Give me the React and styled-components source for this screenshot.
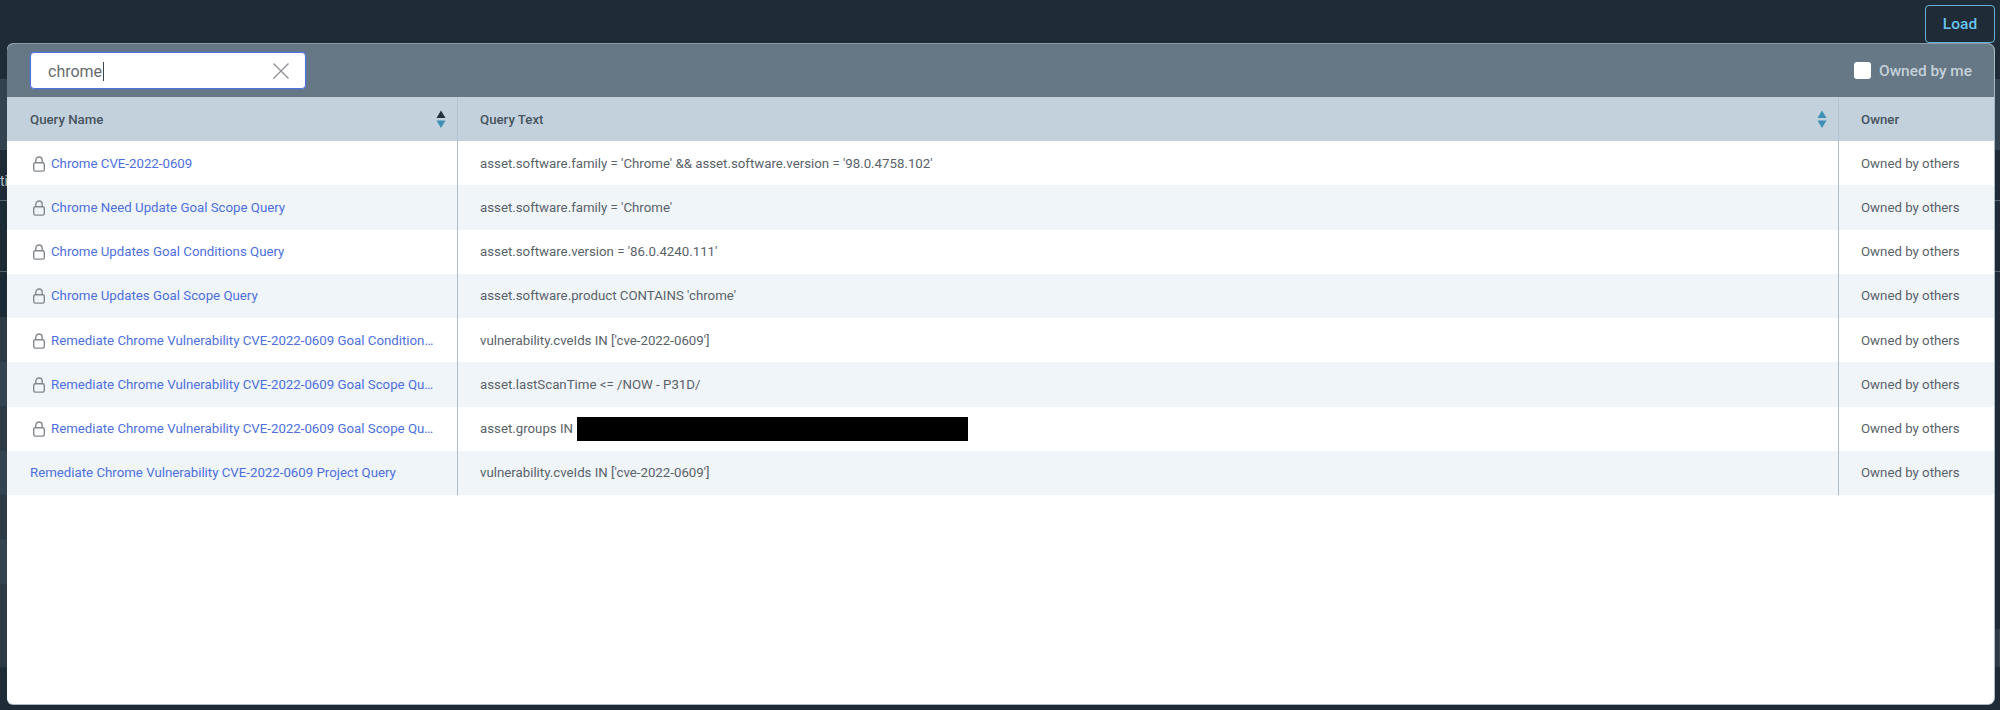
import React from "react";
import styled, { createGlobalStyle } from "styled-components";

const Global = createGlobalStyle`
  html, body { margin: 0; padding: 0; background: #1f2d38; }
  body { font-family: Roboto, "Liberation Sans", sans-serif; overflow: hidden; }
  * { box-sizing: border-box; }
`;

const Page = styled.div`
  position: relative;
  width: 2000px;
  height: 710px;
  overflow: hidden;
  background: #1f2c37;
`;

const TopBar = styled.header`
  height: 79px;
  display: flex;
  justify-content: flex-end;
  align-items: flex-start;
  padding: 5px 5px 0 0;
  background: #1f2c37;
`;

const LoadButton = styled.button`
  width: 70px;
  height: 38px;
  background: transparent;
  border: 1px solid #62b4d6;
  border-radius: 4px;
  color: #68c4ee;
  font: 500 15.5px Roboto, sans-serif;
  padding: 0;
`;

const Band = styled.div`
  height: ${(p) => p.$h}px;
  display: flex;
  border-bottom: ${(p) => (p.$line ? "1px solid #566570" : "0")};
  overflow: hidden;
`;

const BandLead = styled.div`
  width: 1000px;
  background: ${(p) => p.$tone};
  color: #b3bec6;
  font-size: 14px;
  line-height: 62px;
  white-space: nowrap;
`;

const BandRest = styled.div`
  flex: 1;
  background: ${(p) => p.$tone};
`;

const FootRow = styled.div`
  height: 38px;
  display: grid;
  grid-template-columns: 353px 348px 248px 247px 138px 137px 137px 249px 143px;
  background: #2c3a44;
`;

const FootCell = styled.div`
  border-right: 1px solid #3a4954;
`;

const Modal = styled.section`
  position: absolute;
  left: 7px;
  top: 44px;
  width: 1987px;
  height: 660px;
  background: #fff;
  border-radius: 6px;
  box-shadow: 0 -1px 0 #8c9ca8, 0 1px 0 #aab8c2, 1px 0 0 #aab8c2;
  overflow: hidden;
`;

const Toolbar = styled.div`
  height: 53px;
  background: #667885;
  display: flex;
  align-items: center;
  justify-content: space-between;
  padding: 0 22px 0 23px;
`;

const Search = styled.div`
  width: 276px;
  height: 37px;
  background: #fff;
  border: 1px solid #5271db;
  border-radius: 4px;
  display: flex;
  align-items: center;
  padding: 0 16px 0 17px;
  box-shadow: 0 0 0 1px rgba(82, 113, 219, 0.35);
`;

const SearchText = styled.span`
  font-size: 16px;
  padding-top: 1px;
  color: #666c70;
  flex: 1;
  display: flex;
  align-items: center;
`;

const Caret = styled.i`
  display: inline-block;
  width: 1px;
  height: 19px;
  margin-left: 1px;
  background: #39424a;
`;

const Owned = styled.label`
  display: flex;
  align-items: center;
  gap: 8px;
  color: #c5d0d8;
  font-size: 15.4px;
  font-weight: 500;
`;

const Check = styled.span`
  width: 17px;
  height: 17px;
  background: #fff;
  border-radius: 3px;
`;

const Row = styled.div`
  display: grid;
  grid-template-columns: 451px 1381px 1fr;
  height: 44.25px;
  background: ${(p) => (p.$alt ? "#f0f5f9" : "#fff")};
`;

const HeadRow = styled(Row)`
  height: 44px;
  background: #c3d1dc;
`;

const HeadCell = styled.div`
  display: flex;
  align-items: center;
  justify-content: space-between;
  padding: 0 11px 0 ${(p) => (p.$first ? 23 : 22)}px;
  border-right: ${(p) => (p.$last ? "0" : "1px solid #b3c3d0")};
  color: #48545e;
  font-size: 13.25px;
  font-weight: 500;
`;

const Cell = styled.div`
  display: flex;
  align-items: center;
  min-width: 0;
  padding: 0 ${(p) => (p.$first ? 19 : 12)}px 0 ${(p) => (p.$first ? 23 : 22)}px;
  border-right: ${(p) => (p.$last ? "0" : "1px solid #adbdca")};
  color: #5a6269;
  font-size: 13.25px;
  white-space: nowrap;
`;

const LockIcon = styled.svg`
  flex: none;
  width: 14px;
  height: 16px;
  margin: 1px 5px 0 2px;
`;

const NameLink = styled.a`
  color: #4d6fe0;
  overflow: hidden;
  text-overflow: ellipsis;
  min-width: 0;
`;

const Redacted = styled.span`
  display: inline-block;
  width: 391px;
  height: 24px;
  margin-left: 4px;
  background: #000;
`;

const Lock = () => (
  <LockIcon viewBox="0 0 14 16" fill="none" stroke="#83898e" strokeWidth="1.4">
    <rect x="1.7" y="6.7" width="10.6" height="8.4" rx="1.6" />
    <path d="M3.8 6.7V4.2a3.2 3.2 0 0 1 6.4 0v2.5" />
  </LockIcon>
);

const Sort = ({ active }) => (
  <svg width="10" height="19" viewBox="0 0 10 19">
    <path d="M5 0.5 L9.5 8 H0.5 Z" fill={active ? "#25323b" : "#3f90b5"} />
    <path d="M0.5 10.5 H9.5 L5 18 Z" fill="#3f90b5" />
  </svg>
);

const rows = [
  ["Chrome CVE-2022-0609", "asset.software.family = 'Chrome' && asset.software.version = '98.0.4758.102'", true],
  ["Chrome Need Update Goal Scope Query", "asset.software.family = 'Chrome'", true],
  ["Chrome Updates Goal Conditions Query", "asset.software.version = '86.0.4240.111'", true],
  ["Chrome Updates Goal Scope Query", "asset.software.product CONTAINS 'chrome'", true],
  ["Remediate Chrome Vulnerability CVE-2022-0609 Goal Conditions Query", "vulnerability.cveIds IN ['cve-2022-0609']", true],
  ["Remediate Chrome Vulnerability CVE-2022-0609 Goal Scope Query 1", "asset.lastScanTime <= /NOW - P31D/", true],
  ["Remediate Chrome Vulnerability CVE-2022-0609 Goal Scope Query 2", "asset.groups IN", true, true],
  ["Remediate Chrome Vulnerability CVE-2022-0609 Project Query", "vulnerability.cveIds IN ['cve-2022-0609']", false],
];

const bands = [
  [71, "#33434f", "#33434f"],
  [51, "#1f2c37", "#1f2c37", "ti", true],
  [71, "#1c2a34", "#1f2c37", "", true],
  [45, "#1a2933", "#1f2c37"],
  [45, "#2b3a45", "#1f2c37"],
  [44, "#33434f", "#1f2c37"],
  [45, "#2b3a45", "#1f2c37"],
  [44, "#33434f", "#1f2c37"],
  [44, "#2b3a45", "#1f2c37"],
  [45, "#33434f", "#1f2c37"],
  [45, "#2b3a45", "#1f2c37"],
];

export default function App() {
  return (
    <Page>
      <Global />
      <TopBar>
        <LoadButton>Load</LoadButton>
      </TopBar>
      {bands.map(([h, lead, rest, text, line], i) => (
        <Band key={i} $h={h} $line={line}>
          <BandLead $tone={lead}>{text}</BandLead>
          <BandRest $tone={rest} />
        </Band>
      ))}
      <FootRow>
        {Array.from({ length: 9 }, (_, i) => (
          <FootCell key={i} />
        ))}
      </FootRow>
      <Modal>
        <Toolbar>
          <Search>
            <SearchText>
              chrome
              <Caret />
            </SearchText>
            <svg width="16" height="16" viewBox="0 0 16 16" stroke="#8b8f93" strokeWidth="1.3" fill="none">
              <path d="M0.5 0.5 L15.5 15.5 M15.5 0.5 L0.5 15.5" />
            </svg>
          </Search>
          <Owned>
            <Check />
            Owned by me
          </Owned>
        </Toolbar>
        <HeadRow>
          <HeadCell $first>
            Query Name
            <Sort active />
          </HeadCell>
          <HeadCell>
            Query Text
            <Sort />
          </HeadCell>
          <HeadCell $last>Owner</HeadCell>
        </HeadRow>
        {rows.map(([name, text, locked, redacted], i) => (
          <Row key={name} $alt={i % 2 === 1}>
            <Cell $first>
              {locked && <Lock />}
              <NameLink>{name}</NameLink>
            </Cell>
            <Cell>
              {text}
              {redacted && <Redacted />}
            </Cell>
            <Cell $last>Owned by others</Cell>
          </Row>
        ))}
      </Modal>
    </Page>
  );
}
